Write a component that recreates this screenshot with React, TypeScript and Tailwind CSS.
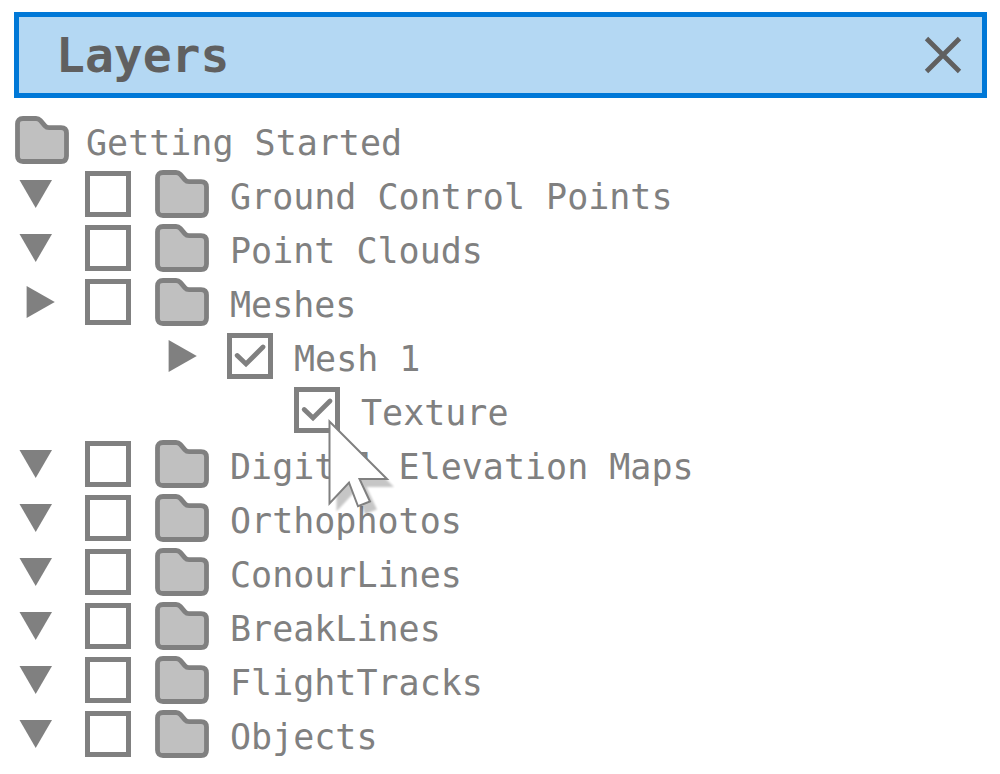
import { useId, useState } from 'react';
import type { ReactNode } from 'react';

type Item = {
  name: string;
  kind: 'group' | 'item' | 'leaf';
  arrow?: 'down' | 'right';
  checked?: boolean;
  pointer?: boolean;
};

const items: Item[] = [
  { name: 'Ground Control Points', kind: 'group', arrow: 'down' },
  { name: 'Point Clouds', kind: 'group', arrow: 'down' },
  { name: 'Meshes', kind: 'group', arrow: 'right' },
  { name: 'Mesh 1', kind: 'item', arrow: 'right', checked: true },
  { name: 'Texture', kind: 'leaf', checked: true, pointer: true },
  { name: 'Digital Elevation Maps', kind: 'group', arrow: 'down' },
  { name: 'Orthophotos', kind: 'group', arrow: 'down' },
  { name: 'ConourLines', kind: 'group', arrow: 'down' },
  { name: 'BreakLines', kind: 'group', arrow: 'down' },
  { name: 'FlightTracks', kind: 'group', arrow: 'down' },
  { name: 'Objects', kind: 'group', arrow: 'down' },
];

const indent = {
  group: 'pl-[19px]',
  item: 'pl-[161px]',
  leaf: 'pl-[294px]',
};

function Folder() {
  return (
    <svg className="h-12 w-[54px] shrink-0" viewBox="0 0 54 48" aria-hidden="true">
      <path
        d="M8 2.5H21Q23.6 2.5 25.3 4.4L30 9.8Q31.5 11.6 34 11.6H46Q51.5 11.6 51.5 17.1V40Q51.5 45.5 46 45.5H8Q2.5 45.5 2.5 40V8Q2.5 2.5 8 2.5Z"
        fill="#c0c0c0"
        stroke="#808080"
        strokeWidth="4.8"
        strokeLinejoin="round"
      />
    </svg>
  );
}

function Arrow({ direction }: { direction: 'down' | 'right' }) {
  return (
    <svg className="h-8 w-10" viewBox="0 0 40 32" aria-hidden="true">
      <path d={direction === 'down' ? 'M0.5 2H33L16.7 30Z' : 'M7.6 0V32L35.8 16Z'} fill="#808080" />
    </svg>
  );
}

function Pointer() {
  return (
    <svg
      className="pointer-events-none absolute left-[33px] top-[30px] z-10 h-[104px] w-[80px]"
      viewBox="0 0 80 104"
      aria-hidden="true"
    >
      <defs>
        <filter id="pointer-shadow" x="-20%" y="-20%" width="140%" height="140%">
          <feGaussianBlur stdDeviation="1" />
        </filter>
      </defs>
      <path
        d="M2.5 4.5L60 62H32.5L43 84.5L31 89.3L22 65.5L2.5 86.5Z"
        transform="translate(7 8)"
        fill="#000000"
        opacity="0.22"
        filter="url(#pointer-shadow)"
      />
      <path
        d="M2.5 4.5L60 62H32.5L43 84.5L31 89.3L22 65.5L2.5 86.5Z"
        fill="#ffffff"
        stroke="#808080"
        strokeWidth="2"
      />
    </svg>
  );
}

function CheckBox({ id, initial, children }: { id: string; initial: boolean; children?: ReactNode }) {
  const [checked, setChecked] = useState(initial);
  return (
    <span className="relative grid size-[46px] shrink-0">
      <input
        id={id}
        type="checkbox"
        checked={checked}
        onChange={(e) => setChecked(e.target.checked)}
        className="col-start-1 row-start-1 m-0 size-[46px] appearance-none border-5 border-[#808080] bg-white"
      />
      {checked && (
        <svg
          className="pointer-events-none col-start-1 row-start-1 size-[46px]"
          viewBox="0 0 46 46"
          aria-hidden="true"
        >
          <path d="M10.2 22.5L19 31L36 14" fill="none" stroke="#808080" strokeWidth="4.8" strokeLinecap="round" />
        </svg>
      )}
      {children}
    </span>
  );
}

function Row({ item }: { item: Item }) {
  const id = useId();
  return (
    <li className={`flex h-[54px] items-center ${indent[item.kind]}`}>
      {item.arrow && (
        <button type="button" aria-label={`Toggle ${item.name}`} className="mr-[26px] shrink-0">
          <Arrow direction={item.arrow} />
        </button>
      )}
      <CheckBox id={id} initial={!!item.checked}>
        {item.pointer && <Pointer />}
      </CheckBox>
      {item.kind === 'group' && (
        <span className="ml-6 shrink-0">
          <Folder />
        </span>
      )}
      <label htmlFor={id} className="ml-[21px] whitespace-nowrap pt-1.5">
        {item.name}
      </label>
    </li>
  );
}

export default function App() {
  return (
    <main className="min-h-screen bg-white pt-3 font-['DejaVu_Sans_Mono',monospace] text-[35px] leading-[42px] text-[#808080]">
      <header className="ml-3.5 mr-[13px] flex h-[86px] items-center justify-between border-5 border-[#0078d7] bg-[#b4d8f3] pl-[37px] pr-[19px] text-[#606060]">
        <h1 className="text-[48px] font-bold leading-[60px]">Layers</h1>
        <button type="button" aria-label="Close">
          <svg className="size-10" viewBox="0 0 40 40" aria-hidden="true">
            <path d="M3.5 3.5L36.5 36.5M36.5 3.5L3.5 36.5" fill="none" stroke="currentColor" strokeWidth="4.8" />
          </svg>
        </button>
      </header>
      <section className="pt-[15px]">
        <div className="flex h-[54px] items-center gap-[17px] pl-[15px]">
          <Folder />
          <h2 className="whitespace-nowrap pt-1.5">Getting Started</h2>
        </div>
        <ul>
          {items.map((item) => (
            <Row key={item.name} item={item} />
          ))}
        </ul>
      </section>
    </main>
  );
}
